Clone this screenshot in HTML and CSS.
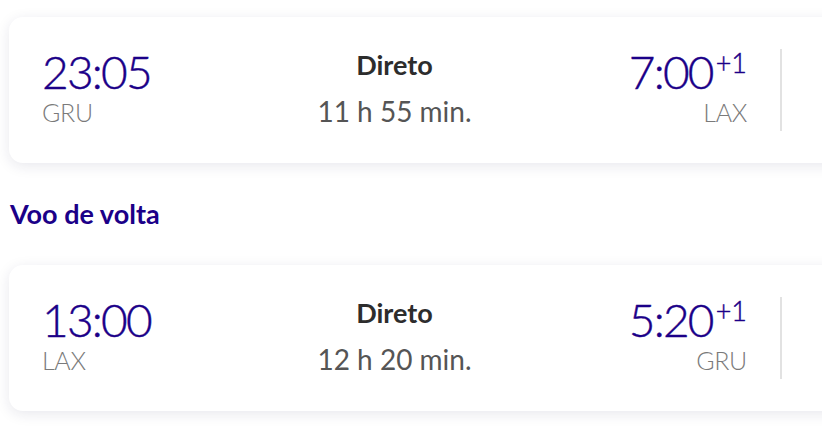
FILE: index.html
```html
<!DOCTYPE html>
<html lang="pt">
<head>
<meta charset="utf-8">
<link rel="stylesheet" href="styles.css">
</head>
<body>
<div class="page">
  <div class="card">
    <div class="route">
      <div class="end start">
        <div class="time">23:05</div>
        <div class="code">GRU</div>
      </div>
      <div class="mid">
        <div class="type">Direto</div>
        <div class="dur">11 h 55 min.</div>
      </div>
      <div class="end finish">
        <div class="time">7:00<sup class="plus">+1</sup></div>
        <div class="code">LAX</div>
      </div>
    </div>
    <div class="divider"></div>
  </div>

  <h2 class="section">Voo de volta</h2>

  <div class="card">
    <div class="route">
      <div class="end start">
        <div class="time">13:00</div>
        <div class="code">LAX</div>
      </div>
      <div class="mid">
        <div class="type">Direto</div>
        <div class="dur">12 h 20 min.</div>
      </div>
      <div class="end finish">
        <div class="time">5:20<sup class="plus">+1</sup></div>
        <div class="code">GRU</div>
      </div>
    </div>
    <div class="divider"></div>
  </div>
</div>
</body>
</html>
```

FILE: styles.css
```css
* { box-sizing: border-box; }
html, body { margin: 0; padding: 0; background: #fff; }
body { width: 822px; height: 430px; overflow: hidden; font-family: Lato, "Open Sans", sans-serif; }

.page { padding: 17px 0 0 9px; display: flex; flex-direction: column; }

.card {
  width: 900px;
  height: 146px;
  background: #fff;
  border-radius: 14px;
  box-shadow: 0 3px 14px rgba(30, 30, 80, 0.10);
  display: flex;
  align-items: center;
  padding-left: 33px;
}

.route {
  width: 705px;
  display: grid;
  grid-template-columns: 1fr auto 1fr;
  align-items: center;
}

.end { display: flex; flex-direction: column; }
.finish { align-items: flex-end; }

.time {
  color: #1b0088;
  font-size: 46px;
  font-weight: 300;
  line-height: 50px;
  letter-spacing: -1.8px;
  white-space: nowrap;
  -webkit-text-stroke: 0.4px #1b0088;
}
.plus {
  font-size: 27px;
  vertical-align: top;
  position: relative;
  top: -9px;
  margin-left: 3px;
  letter-spacing: 0;
  font-weight: 300;
}
.code {
  color: #7a7a7a;
  font-size: 25px;
  font-weight: 300;
  line-height: 30px;
  letter-spacing: -0.3px;
  margin-bottom: 6px;
}

.mid { text-align: center; }
.type { color: #2d2d2d; font-size: 27px; font-weight: 700; line-height: 44px; margin-bottom: 4px; }
.dur { color: #555; font-size: 28px; font-weight: 400; line-height: 40px; margin-bottom: 6px; }

.divider {
  width: 2px;
  height: 82px;
  background: #e2e2e2;
  margin-left: 33px;
}

.section {
  margin: 37px 0 37px 1px;
  color: #1b0088;
  font-size: 27px;
  font-weight: 700;
  line-height: 28px;
}
```
